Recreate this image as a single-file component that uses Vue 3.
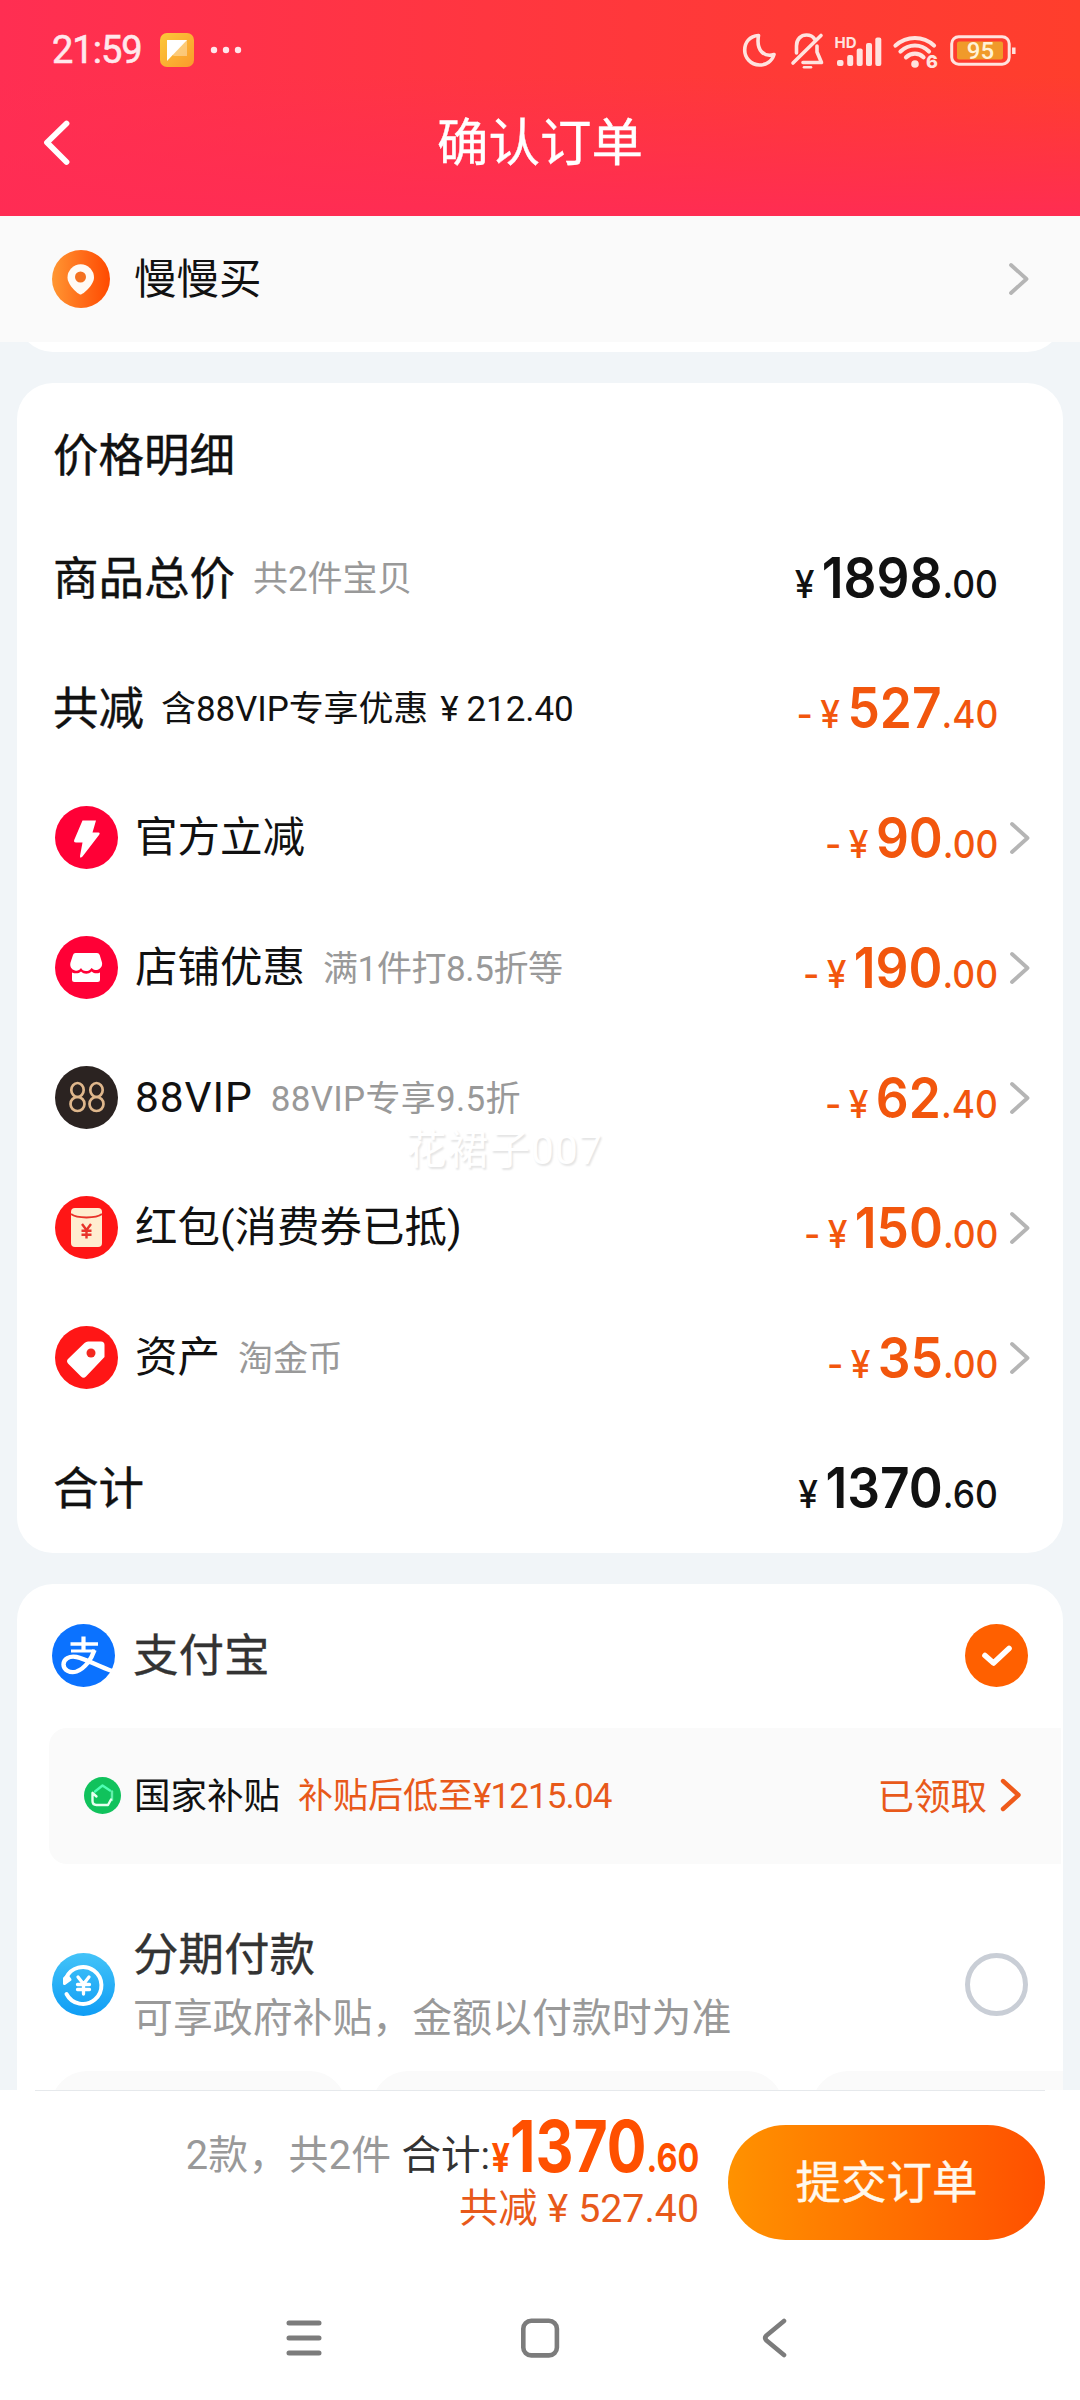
<script setup>
const rows = [
  { label: '商品总价', note: '共2件宝贝', strong: true, int: '1898', dec: '.00' },
  { label: '共减', note: '含88VIP专享优惠', extra: '212.40', strong: true, darkNote: true, minus: true, int: '527', dec: '.40' },
  { icon: 'bolt', label: '官方立减', minus: true, int: '90', dec: '.00', arrow: true },
  { icon: 'shop', label: '店铺优惠', note: '满1件打8.5折等', tight: true, minus: true, int: '190', dec: '.00', arrow: true },
  { icon: 'vip', label: '88VIP', note: '88VIP专享9.5折', minus: true, int: '62', dec: '.40', arrow: true },
  { icon: 'packet', label: '红包(消费券已抵)', minus: true, int: '150', dec: '.00', arrow: true },
  { icon: 'tag', label: '资产', note: '淘金币', minus: true, int: '35', dec: '.00', arrow: true },
  { label: '合计', strong: true, int: '1370', dec: '.60' },
]
</script>

<template>
  <div class="page">
    <header class="header">
      <div class="status">
        <span class="time">21:59</span>
        <svg class="app-icon" width="34" height="34" viewBox="0 0 34 34">
          <defs>
            <linearGradient id="gApp" x1="0" y1="0" x2="1" y2="1">
              <stop offset="0" stop-color="#fbc93a" /><stop offset="1" stop-color="#fb9a2c" />
            </linearGradient>
          </defs>
          <rect width="34" height="34" rx="7" fill="url(#gApp)" />
          <path d="M7 7h20v16H13.500z" fill="#fff" opacity=".35" />
          <path d="M7 7h20L7 28z" fill="#fff" />
        </svg>
        <svg width="32" height="8" viewBox="0 0 32 8" fill="#ffe6ea">
          <circle cx="4" cy="4" r="3.200" /><circle cx="16" cy="4" r="3.200" /><circle cx="28" cy="4" r="3.200" />
        </svg>
        <svg class="status-icons" width="276" height="48" viewBox="0 -4 276 48" fill="none" stroke="#ffe3df">
          <path d="M18.500 5.500C9.500 6 4.700 12.500 4.700 20S10.500 35 19.500 35C26.500 35 32 31 34 24.500C24 27.500 16 20.500 18.500 5.500Z" stroke-width="3.600" stroke-linejoin="round" />
          <g stroke-width="3.600" stroke-linecap="round" stroke-linejoin="round">
            <path d="M53 33L81 5.500" />
            <path d="M56.500 23V16C56.500 9 61 5 66.500 5C70 5 73 6.500 74.500 9" />
            <path d="M77 16V22L81.500 32.500H63" />
            <path d="M64 37.200H71" stroke-width="2.600" />
          </g>
          <g fill="#ffe3df" stroke="none">
            <rect x="97" y="30" width="6.500" height="6" rx="2" />
            <rect x="107.200" y="25" width="6" height="11" rx="2" />
            <rect x="116.700" y="18.500" width="6" height="17.500" rx="2" />
            <rect x="126" y="13" width="6" height="23" rx="2" />
            <rect x="135.300" y="7.500" width="6" height="28.500" rx="2" />
            <text x="94.500" y="17.500" class="hd">HD</text>
            <text x="186" y="38" class="six">6</text>
            <circle cx="175" cy="34" r="3.800" />
          </g>
          <g stroke-width="4.200" stroke-linecap="round">
            <path d="M155.500 15.500C167 5.500 183 5.500 194 15.500" />
            <path d="M160.500 21.500C169 13.500 181 13.500 189 21.500" />
            <path d="M166 27.300C171.500 22.500 178.500 22.500 183.500 27.300" />
          </g>
          <rect x="211.700" y="6.700" width="57.500" height="27.500" rx="7" stroke-width="3" />
          <rect x="217" y="11.500" width="46" height="18" rx="2" fill="#f09a2a" stroke="none" />
          <path d="M273.800 17.500V24" stroke-width="3.500" />
          <text x="240.500" y="29" text-anchor="middle" class="bat">95</text>
        </svg>
      </div>
      <div class="navbar">
        <svg class="back" width="30" height="46" viewBox="0 0 30 46" fill="none" stroke="#fff" stroke-width="5.800" stroke-linecap="round" stroke-linejoin="round">
          <path d="M26.500 3.500L7 22.500L26.500 42" />
        </svg>
        <h1>确认订单</h1>
      </div>
    </header>

    <section class="address">
      <svg width="58" height="58" viewBox="0 0 58 58">
        <defs>
          <linearGradient id="gPin" x1="0" x2="1"><stop offset="0" stop-color="#ff9632" /><stop offset=".55" stop-color="#ff6a18" /><stop offset="1" stop-color="#ff4a00" /></linearGradient>
        </defs>
        <circle cx="29" cy="29" r="29" fill="url(#gPin)" />
        <path d="M28.500 44.500C26 44.500 15.500 35 15.500 27.500A13.200 13.200 0 0 1 42 27.500C42 35 31 44.500 28.500 44.500Z" fill="#fffaf4" />
        <circle cx="28.500" cy="27" r="5.500" fill="#f4711f" />
      </svg>
      <span class="address-text">慢慢买</span>
      <svg class="chev" width="22" height="34" viewBox="0 0 22 34"><path d="M3 3L18.500 17L3 31" /></svg>
    </section>
    <div class="card-tail-wrap"><div class="card-tail"></div></div>

    <section class="card price">
      <h2>价格明细</h2>
      <div v-for="r in rows" :key="r.label" class="row">
        <svg v-if="r.icon" class="row-icon" width="63" height="63" viewBox="0 0 63 63">
          <template v-if="r.icon === 'bolt'">
            <circle cx="31.500" cy="31.500" r="31.500" fill="#ff0036" />
            <path d="M27.500 14.500H41L37.500 26.500H43.500Q45.500 26.500 44 29L27.500 50.500Q25 53 25 50L27.500 36.500H21Q18.500 36.500 19.200 34Z" fill="#fff" />
          </template>
          <template v-else-if="r.icon === 'shop'">
            <circle cx="31.500" cy="31.500" r="31.500" fill="#ff0036" />
            <path d="M20.500 17H42Q44 17 44.700 19L47 26.500C48 31 44 34.500 40 34C37.500 33.500 37 32 36.500 32C35 34.500 33 35 31 35C28.500 35 27 34 26 32C24.500 34.500 22 35 20 34.500C16.500 33.500 14.500 30.500 15.500 26.500L18 19Q18.500 17 20.500 17Z" fill="#fff" />
            <path d="M17 36.500C20.500 38 24 37.500 26 35.500C29 38.500 33.500 38.500 36.500 35.500C39 37.500 42 38 45 36.500V43.500Q45 46 42.500 46H19.500Q17 46 17 43.500Z" fill="#fff" />
          </template>
          <template v-else-if="r.icon === 'vip'">
            <circle cx="31.500" cy="31.500" r="31.500" fill="#2b2321" />
            <g fill="none" stroke="#dfb78c" stroke-width="2.700">
              <ellipse cx="22.500" cy="24" rx="6.200" ry="7" /><ellipse cx="22.500" cy="38" rx="7" ry="7" />
              <ellipse cx="41.500" cy="24" rx="6.200" ry="7" /><ellipse cx="41.500" cy="38" rx="7" ry="7" />
            </g>
          </template>
          <template v-else-if="r.icon === 'packet'">
            <circle cx="31.500" cy="31.500" r="31.500" fill="#ff1616" />
            <rect x="16" y="12" width="31" height="39" rx="4" fill="#ffedd0" />
            <path d="M16 18C22 22.500 41 22.500 47 18" fill="none" stroke="#e8332a" stroke-width="2" />
            <path d="M27 28L31.500 34L36 28M31.500 34V42.500M26.500 34.700H36.500M26.500 38.700H36.500" fill="none" stroke="#e8332a" stroke-width="2.400" />
          </template>
          <template v-else>
            <circle cx="31.500" cy="31.500" r="31.500" fill="#ff1616" />
            <path d="M33 15.500H46Q49.500 15.500 49.500 19V31L31 50.500Q28.500 53 26 50.500L13 37.500Q11 35 13 33L29.500 17Q31 15.500 33 15.500Z" fill="#fff" />
            <circle cx="36" cy="27" r="4.500" fill="#f3281f" />
          </template>
        </svg>
        <span class="label" :class="{ strong: r.strong, wide: r.icon === 'vip' }">{{ r.label }}</span>
        <span v-if="r.note" class="note" :class="{ dark: r.darkNote, tight: r.tight, vip: r.icon === 'vip' }">{{ r.note }}<template v-if="r.extra"><i class="fy">¥</i>{{ r.extra }}</template></span>
        <span class="amount" :class="{ off: r.minus }"><b v-if="r.minus" class="minus">-</b><small class="yen">¥</small><strong>{{ r.int }}</strong><small>{{ r.dec }}</small></span>
        <span class="arrow"><svg v-if="r.arrow" class="chev" width="22" height="34" viewBox="0 0 22 34"><path d="M3 3L18.500 17L3 31" /></svg></span>
      </div>
      <span class="watermark">花裙子007</span>
    </section>

    <section class="card pay">
      <div class="method">
        <svg width="63" height="63" viewBox="0 0 63 63">
          <circle cx="31.500" cy="31.500" r="31.500" fill="#0b72ff" />
          <g fill="none" stroke="#fff" stroke-linecap="butt">
            <path d="M18.500 20H46" stroke-width="3.400" /><path d="M31.500 12.500V27" stroke-width="4.200" /><path d="M19 27H43" stroke-width="3.200" />
            <path d="M42.500 26C39.500 35 33 44.500 24.500 47.500C18 49.500 11.500 46 11.500 40.500C11.500 35 17.500 31.500 24.500 33C34 35 45 41.500 60 47" stroke-width="4.400" />
          </g>
        </svg>
        <span class="method-name">支付宝</span>
        <svg class="end" width="63" height="63" viewBox="0 0 63 63">
          <circle cx="31.500" cy="31.500" r="31.500" fill="#ff6000" />
          <path d="M20 31.500L28.500 39L44 24.500" fill="none" stroke="#fff" stroke-width="5.600" stroke-linecap="round" stroke-linejoin="round" />
        </svg>
      </div>
      <div class="subsidy">
        <svg width="37" height="37" viewBox="0 0 37 37">
          <circle cx="18.500" cy="18.500" r="18.500" fill="#10c25c" />
          <g fill="none" stroke-width="2.400" stroke-linejoin="round" stroke-linecap="round">
            <path d="M11 14.500L18.500 8.500L26 13.500" stroke="#4dffb4" /><path d="M28 14.500V23" stroke="#62efab" />
            <path d="M8.500 16V24Q8.500 28 12.500 28H24L27 22.500M8.500 16L12.500 19.500" stroke="#e7fff0" />
          </g>
        </svg>
        <span class="sub-name">国家补贴</span>
        <span class="sub-price">补贴后低至<i>¥1215.04</i></span>
        <span class="sub-got">已领取</span>
        <svg class="chev orange" width="22" height="34" viewBox="0 0 22 34"><path d="M3 3L18.500 17L3 31" /></svg>
      </div>
      <div class="method installment">
        <svg width="63" height="63" viewBox="0 0 63 63">
          <defs><linearGradient id="gIns" x1="0" y1="0" x2="0" y2="1"><stop offset="0" stop-color="#43c3f8" /><stop offset="1" stop-color="#0f9df5" /></linearGradient></defs>
          <circle cx="31.500" cy="31.500" r="31.500" fill="url(#gIns)" />
          <g fill="none" stroke="#fff" stroke-linecap="round" stroke-linejoin="round">
            <path d="M14 25A18.500 18.500 0 1 1 14.500 41" stroke-width="4" />
            <path d="M12.500 30.500V25.500L15.500 23L18 26.500Z" stroke-width="3" fill="#fff" />
            <path d="M26 24L31.500 31L37 24M31.500 31V41M25.500 31.500H37.500M25.500 36.500H37.500" stroke-width="3.300" />
          </g>
        </svg>
        <div class="ins-text">
          <span class="method-name">分期付款</span>
          <span class="ins-note">可享政府补贴，金额以付款时为准</span>
        </div>
        <span class="radio end"></span>
      </div>
      <div class="chips"><i class="c1"></i><i class="c2"></i><i class="c3"></i></div>
    </section>

    <footer class="footer">
      <div class="bar">
        <div class="totals">
          <div class="line1">
            <span class="count">2款，共2件</span>
            <span class="sum">合计:</span>
            <span class="grand"><span class="grand-in"><small>¥</small><strong>1370</strong><small>.60</small></span></span>
          </div>
          <div class="line2">共减<i>¥</i>527.40</div>
        </div>
        <button class="submit">提交订单</button>
      </div>
      <nav class="sysnav">
        <svg width="40" height="42" viewBox="0 0 40 42" stroke-width="5" stroke-linecap="round"><path d="M5 6H35M5 21H35M5 36H35" /></svg>
        <svg width="40" height="42" viewBox="0 0 40 42" stroke-width="4.600"><rect x="3.300" y="3.800" width="33.600" height="34.600" rx="8" /></svg>
        <svg width="40" height="42" viewBox="0 0 40 42" stroke-width="4.600" stroke-linecap="round" stroke-linejoin="round"><path d="M28 4L10.500 18.500Q8 21 10.500 23.500L28 38" /></svg>
      </nav>
    </footer>
  </div>
</template>

<style>
body { margin: 0; background: #f1f5f8; }
</style>

<style scoped>
* { box-sizing: border-box; }
.page {
  width: 1080px; height: 2400px; overflow: hidden;
  display: flex; flex-direction: column;
  background: #f1f5f8; color: #111; line-height: 1;
  font-family: Roboto, "Noto Sans CJK SC", sans-serif;
}
svg { display: block; flex: none; }
i { font-style: normal; }
.header {
  height: 216px; flex: none; color: #fff;
  background: linear-gradient(180deg, rgba(255, 44, 84, 0) 35%, rgba(255, 44, 84, .95) 100%), linear-gradient(90deg, #ff2e52 0%, #ff3640 45%, #ff3e2c 100%);
}
.status { height: 100px; display: flex; align-items: center; padding: 0 64px 0 52px; }
.time { width: 108px; font-size: 38px; letter-spacing: -1px; color: #ffe8ec; -webkit-text-stroke: .6px #ffe8ec; }
.app-icon { margin-right: 16px; }
.status-icons { margin-left: auto; }
.hd { font: 700 15px Inter, sans-serif; }
.six { font: 800 18px Inter, sans-serif; }
.bat { font: 500 24px Roboto, sans-serif; fill: #fff3d8; stroke: none; }
.navbar { height: 86px; display: flex; align-items: center; padding: 0 40px; }
.back { margin-right: -30px; }
h1 { flex: 1; margin: 0; padding-bottom: 9px; text-align: center; font: 400 51.500px/1 "Noto Sans CJK SC", sans-serif; -webkit-text-stroke: .4px #fff; }
.address { height: 126px; flex: none; background: #fafafa; display: flex; align-items: center; padding: 0 50px 0 52px; position: relative; z-index: 1; }
.address-text { margin-left: 24px; padding-bottom: 5px; font: 400 42.500px/1 "Noto Sans CJK SC", sans-serif; }
.chev { margin-left: auto; fill: none; stroke: #b5b5b5; stroke-width: 3.800; stroke-linecap: round; stroke-linejoin: round; }
.card-tail-wrap { height: 41px; flex: none; overflow: hidden; display: flex; align-items: flex-start; padding: 0 17px; }
.card-tail { flex: 1; height: 80px; margin-top: -70px; background: #fff; border-radius: 36px; }
.card { margin: 0 17px; background: #fff; flex: none; }
.price { height: 1170px; border-radius: 36px; position: relative; }
h2 { height: 130px; margin: 0; padding: 11px 0 0 36px; font: 400 45.500px/116px "Noto Sans CJK SC", sans-serif; -webkit-text-stroke: .4px #111; }
.row { height: 130px; display: flex; align-items: center; padding: 0 31px 0 36px; }
.row-icon { margin: 0 16px 1px 2px; }
.label { font-size: 42.500px; padding-top: 1px; white-space: nowrap; }
.row-icon + .label { padding-left: 1px; }
.label.strong { font-size: 45.500px; padding-top: 3px; -webkit-text-stroke: .4px #111; }
.label.wide { letter-spacing: .9px; }
.note { margin-left: 18px; font-size: 35px; color: #999; padding-top: 2px; white-space: nowrap; letter-spacing: -.1px; }
.note.tight { letter-spacing: -.4px; }
.note.vip { letter-spacing: .3px; }
.note.dark { color: #111; letter-spacing: -.1px; margin-left: 17px; }
.fy { margin: 0 8px 0 12px; }
.amount {
  margin-left: auto; display: flex; align-items: baseline;
  font-family: Inter, "Noto Sans CJK SC", sans-serif; color: #111;
  transform: scaleX(.92); transform-origin: right center; white-space: nowrap;
}
.amount.off { color: #f2560d; }
.amount strong { font-size: 56px; font-weight: 600; }
.amount small { font-size: 38.500px; font-weight: 500; }
.amount .yen { margin-right: 8px; }
.amount .minus { font-size: 38.500px; font-weight: 500; margin-right: 8px; }
.arrow { width: 34px; display: flex; }
.arrow .chev { margin-right: 1px; }
.watermark {
  position: absolute; left: 389px; top: 747px; font-size: 40.500px; color: #fff; letter-spacing: 1.200px;
  text-shadow: 1.500px 1.500px 2px #e4e4e4; white-space: nowrap;
}
.pay { margin-top: 31px; height: 506px; border-radius: 36px 36px 0 0; overflow: hidden; }
.method { height: 143px; display: flex; align-items: center; padding: 0 35px; }
.method-name { font: 400 45.500px/1 "Noto Sans CJK SC", sans-serif; color: #333; margin-left: 18px; padding-bottom: 6px; -webkit-text-stroke: .3px #333; }
.end { margin-left: auto; }
.subsidy { height: 136px; margin: 1px 2px 0 32px; padding: 0 39px 2px 35px; background: #fafafa; border-radius: 18px 0 0 18px; display: flex; align-items: center; }
.sub-name { margin-left: 13px; font: 400 36.500px/1 "Noto Sans CJK SC", sans-serif; padding-bottom: 1px; }
.sub-price { margin-left: 18px; font-size: 35px; color: #e8591a; padding-top: 3px; white-space: nowrap; }
.sub-price i { letter-spacing: -.9px; }
.sub-got { margin-left: auto; font: 400 36.500px/1 "Noto Sans CJK SC", sans-serif; color: #e8591a; }
.chev.orange { margin-left: 13px; stroke: #ef5a1a; stroke-width: 4.400; }
.installment { height: 207px; padding-top: 32px; }
.installment > svg, .installment > .radio { margin-top: 2px; }
.ins-text { display: flex; flex-direction: column; gap: 15px; }
.ins-note { margin-left: 18px; font: 400 39.900px/1 "Noto Sans CJK SC", sans-serif; color: #999; padding-bottom: 3px; }
.radio { width: 63px; height: 63px; border-radius: 50%; border: 5px solid #c9ced6; }
.chips { display: flex; }
.chips i { height: 80px; background: #fafafa; border-radius: 36px; flex: none; }
.c1 { margin-left: 34px; width: 295px; }
.c2 { margin-left: 26px; width: 411px; }
.c3 { margin-left: 29px; width: 320px; }
.footer { flex: 1; background: #fff; display: flex; flex-direction: column; }
.bar { height: 185px; margin: 0 35px; border-top: 1px solid #e6e9ec; display: flex; justify-content: flex-end; }
.totals { width: 560px; display: flex; flex-direction: column; align-items: flex-end; margin-right: 29px; }
.line1 { height: 99px; display: flex; align-items: baseline; padding-top: 17px; white-space: nowrap; }
.count { font-size: 39.800px; color: #999; letter-spacing: .3px; }
.sum { margin-left: 10px; font-size: 39.500px; color: #333; }
.grand { width: 209px; display: flex; justify-content: flex-end; align-items: baseline; }
.grand-in { font-family: Inter, sans-serif; color: #ff5000; transform: translateY(3px) scaleX(.83); transform-origin: right center; }
.grand-in strong { font-size: 71px; font-weight: 700; }
.grand-in small { font-size: 39px; font-weight: 700; }
.line2 { font-size: 39.300px; color: #e8591a; white-space: nowrap; }
.line2 i { margin: 0 10px; }
.submit {
  width: 317px; height: 115px; margin: 34px 0 0; padding: 0 0 5px; border: 0; border-radius: 58px;
  background: linear-gradient(90deg, #ff9200, #ff5000); color: #fff8ec;
  font: 400 45.500px/1 "Noto Sans CJK SC", sans-serif; -webkit-text-stroke: .4px #fff8ec;
}
.sysnav { height: 125px; display: flex; justify-content: center; align-items: center; gap: 196px; }
.sysnav svg { fill: none; stroke: #7c7c7c; }
</style>
